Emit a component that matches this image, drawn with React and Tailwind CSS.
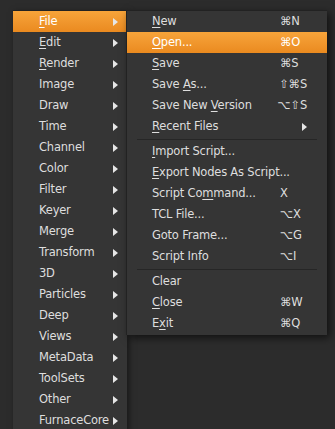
import React from 'react';

const font = { fontFamily: '"DejaVu Sans", "Noto Sans", sans-serif' };

const leftItems = [
    ['File', 'F'], ['Edit', 'E'], ['Render', 'R'], ['Image'], ['Draw'], ['Time'], ['Channel'],
    ['Color'], ['Filter'], ['Keyer'], ['Merge'], ['Transform'], ['3D'], ['Particles'], ['Deep'],
    ['Views'], ['MetaData'], ['ToolSets'], ['Other'], ['FurnaceCore'],
];

const rightItems = [
    { label: 'New', u: 0, key: '⌘N' },
    { label: 'Open...', u: 0, key: '⌘O', active: true },
    { label: 'Save', u: 0, key: '⌘S' },
    { label: 'Save As...', u: 5, key: '⇧⌘S' },
    { label: 'Save New Version', u: 9, key: '⌥⇧S' },
    { label: 'Recent Files', u: 0, arrow: true },
    { sep: true },
    { label: 'Import Script...', u: 0 },
    { label: 'Export Nodes As Script...', u: 0 },
    { label: 'Script Command...', u: 9, key: 'X' },
    { label: 'TCL File...', key: '⌥X' },
    { label: 'Goto Frame...', key: '⌥G' },
    { label: 'Script Info', key: '⌥I' },
    { sep: true },
    { label: 'Clear' },
    { label: 'Close', u: 0, key: '⌘W' },
    { label: 'Exit', u: 1, key: '⌘Q' },
];

const Label = ({ text, u }) => {
    if (u === undefined) return <span>{text}</span>;
    return (
        <span>
            {text.slice(0, u)}
            <span className="underline underline-offset-2">{text[u]}</span>
            {text.slice(u + 1)}
        </span>
    );
};

const Arrow = () => (
    <svg width="5" height="8" viewBox="0 0 5 8" className="shrink-0">
        <path d="M0 0 L5 4 L0 8 Z" fill="#e6e6e6" />
    </svg>
);

const orange = 'bg-gradient-to-b from-[#f7a43a] to-[#ea8a1f] text-white';

export default function App() {
    return (
        <div className="w-[335px] h-[429px] bg-[#2c2c2c] overflow-hidden relative text-[11.5px] tracking-[-0.2px] text-[#dedede]" style={font}>
            <div className="absolute left-[13px] top-[10px] w-[114px] bg-[#353535] border-t border-[#222] shadow-[2px_2px_6px_rgba(0,0,0,0.5)]">
                {leftItems.map(([name, u], i) => (
                    <div key={name} className={`h-[21px] flex items-center pl-[26px] pr-[9px] ${i === 0 ? orange : ''}`}>
                        <span className="flex-1 whitespace-nowrap">
                            <Label text={name} u={u ? 0 : undefined} />
                        </span>
                        <Arrow />
                    </div>
                ))}
            </div>
            <div className="absolute left-[126px] top-[10px] w-[201px] bg-[#353535] border-t border-l border-[#222] shadow-[3px_3px_8px_rgba(0,0,0,0.6)] pb-[1px]">
                {rightItems.map((it, i) =>
                    it.sep ? (
                        <div key={i} className="h-[4px] flex items-center px-[10px]">
                            <div className="w-full h-px bg-[#262626]" />
                        </div>
                    ) : (
                        <div key={i} className={`h-[21px] flex items-center pl-[25px] pr-[20px] ${it.active ? orange : ''}`}>
                            <span className="w-[128px] whitespace-nowrap">
                                <Label text={it.label} u={it.u} />
                            </span>
                            <span className="flex-1 whitespace-nowrap">{it.key}</span>
                            {it.arrow && <Arrow />}
                        </div>
                    )
                )}
            </div>
        </div>
    );
}
